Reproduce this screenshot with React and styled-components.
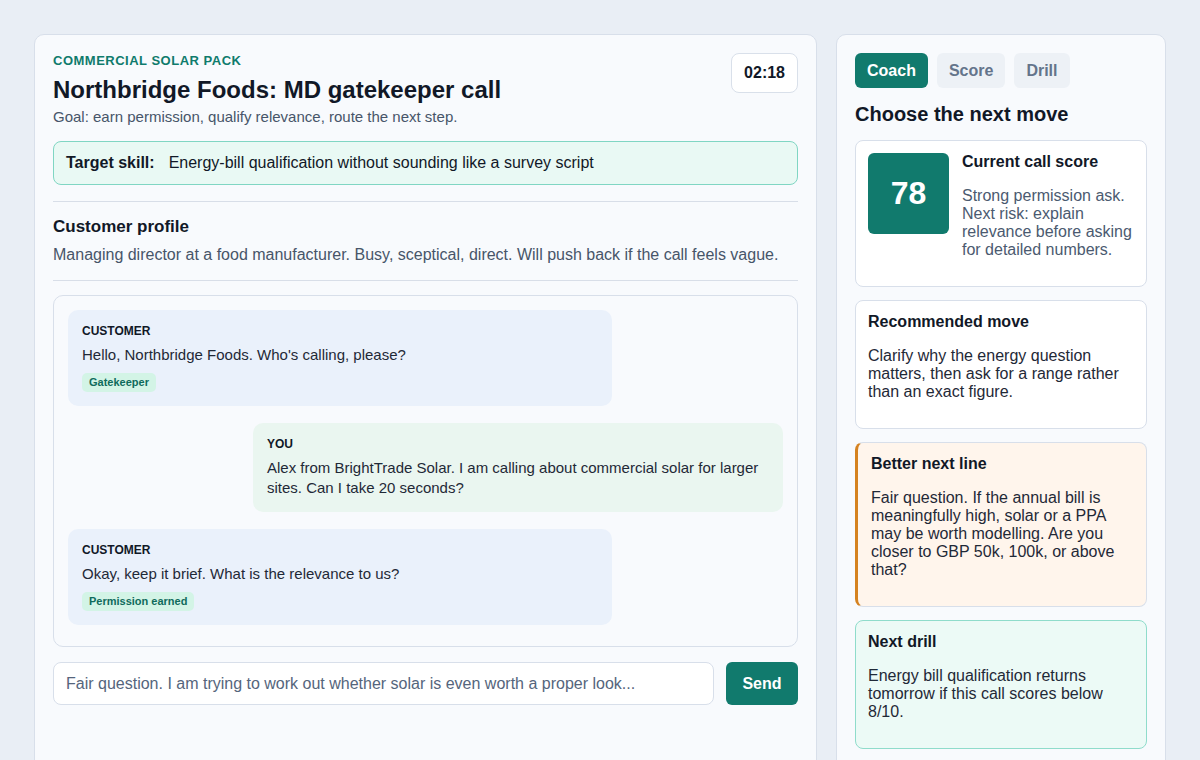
import React from "react";
import styled, { createGlobalStyle } from "styled-components";

const GlobalStyle = createGlobalStyle`
  * { box-sizing: border-box; }
  html, body { margin: 0; padding: 0; }
  body {
    background: #e9eef5;
    font-family: "Liberation Sans", Arial, Helvetica, sans-serif;
    color: #111827;
  }
`;

const Page = styled.div`
  display: grid;
  grid-template-columns: 1fr 330px;
  gap: 19px;
  padding: 34px 34px 0;
  min-height: 800px;
`;

const Panel = styled.section`
  background: #f8fafd;
  border: 1px solid #d8dfea;
  border-radius: 10px;
  padding: 18px;
  display: flex;
  flex-direction: column;
  min-height: 740px;
`;

const HeaderRow = styled.div`
  display: flex;
  justify-content: space-between;
  align-items: flex-start;
`;

const Eyebrow = styled.div`
  font-size: 13px;
  font-weight: 700;
  letter-spacing: 0.5px;
  color: #0f7b6c;
  text-transform: uppercase;
  line-height: 15px;
`;

const Title = styled.h1`
  margin: 8px 0 0;
  font-size: 24px;
  line-height: 28px;
  font-weight: 700;
  color: #111827;
`;

const Subtitle = styled.p`
  margin: 5px 0 0;
  font-size: 15px;
  line-height: 16px;
  color: #475569;
`;

const Timer = styled.div`
  background: #fff;
  border: 1px solid #d9e0ea;
  border-radius: 8px;
  height: 40px;
  padding: 0 12px;
  display: flex;
  align-items: center;
  font-size: 16px;
  font-weight: 700;
  color: #111827;
`;

const SkillBox = styled.div`
  margin-top: 16px;
  background: #e9f9f4;
  border: 1px solid #80d6c3;
  border-radius: 8px;
  padding: 12px 12px;
  display: flex;
  gap: 14px;
  font-size: 16px;
  line-height: 18px;
  color: #111827;
`;

const SkillLabel = styled.strong`
  font-weight: 700;
`;

const Profile = styled.div`
  margin-top: 16px;
  border-top: 1px solid #d8dee8;
  border-bottom: 1px solid #d8dee8;
  padding: 15px 0 16px;
`;

const SectionTitle = styled.h2`
  margin: 0;
  font-size: 17px;
  line-height: 20px;
  font-weight: 700;
  color: #111827;
`;

const ProfileText = styled.p`
  margin: 9px 0 0;
  font-size: 16px;
  line-height: 18px;
  color: #475569;
`;

const Chat = styled.div`
  margin-top: 14px;
  background: #f8fafd;
  border: 1px solid #d8dfea;
  border-radius: 10px;
  padding: 14px 14px;
  height: 352px;
  display: flex;
  flex-direction: column;
  gap: 17px;
`;

const Bubble = styled.div`
  width: ${(p) => p.$width};
  align-self: ${(p) => (p.$mine ? "flex-end" : "flex-start")};
  background: ${(p) => (p.$mine ? "#eaf6f0" : "#eaf1fb")};
  border-radius: 10px;
  padding: 14px 14px 14px;
`;

const Speaker = styled.div`
  font-size: 12px;
  line-height: 15px;
  font-weight: 700;
  color: #111827;
  text-transform: uppercase;
`;

const Line = styled.p`
  margin: 6px 0 0;
  font-size: 15px;
  line-height: 20px;
  color: #1f2937;
`;

const Tag = styled.span`
  display: inline-block;
  margin-top: 8px;
  background: #d3f4e6;
  color: #0f6b5c;
  font-size: 11px;
  font-weight: 700;
  line-height: 13px;
  padding: 3px 7px;
  border-radius: 5px;
`;

const Composer = styled.div`
  margin-top: 15px;
  display: flex;
  gap: 12px;
`;

const Input = styled.input`
  flex: 1;
  height: 43px;
  border: 1px solid #d8dfea;
  border-radius: 8px;
  background: #fff;
  padding: 0 12px;
  font-family: inherit;
  font-size: 16px;
  color: #1f2937;
  &::placeholder { color: #55657c; }
`;

const SendButton = styled.button`
  width: 72px;
  height: 43px;
  border: none;
  border-radius: 6px;
  background: #117a6d;
  color: #fff;
  font-family: inherit;
  font-size: 16px;
  font-weight: 700;
`;

const Tabs = styled.div`
  display: flex;
  gap: 9px;
`;

const Tab = styled.button`
  height: 35px;
  padding: 0 12px;
  border: none;
  border-radius: 6px;
  font-family: inherit;
  font-size: 16px;
  font-weight: 700;
  background: ${(p) => (p.$active ? "#117a6d" : "#edf1f6")};
  color: ${(p) => (p.$active ? "#fff" : "#64748b")};
`;

const SideHeading = styled.h2`
  margin: 15px 0 14px;
  font-size: 20px;
  line-height: 23px;
  font-weight: 700;
  color: #111827;
`;

const Cards = styled.div`
  display: flex;
  flex-direction: column;
  gap: 13px;
`;

const Card = styled.div`
  background: ${(p) => p.$bg || "#fff"};
  border: 1px solid ${(p) => p.$line || "#d8dfea"};
  border-left: ${(p) => (p.$accent ? `3px solid ${p.$accent}` : `1px solid ${p.$line || "#d8dfea"}`)};
  border-radius: 8px;
  padding: 12px 13px 11px ${(p) => (p.$accent ? "13px" : "12px")};
`;

const ScoreRow = styled.div`
  display: flex;
  gap: 13px;
  align-items: flex-start;
`;

const ScoreBadge = styled.div`
  flex: 0 0 81px;
  height: 81px;
  border-radius: 6px;
  background: #117a6d;
  color: #fff;
  font-size: 32px;
  font-weight: 700;
  display: flex;
  align-items: center;
  justify-content: center;
`;

const CardTitle = styled.h3`
  margin: 0;
  font-size: 16px;
  line-height: 18px;
  font-weight: 700;
  color: #111827;
`;

const CardText = styled.p`
  margin: 16px 0;
  font-size: 16px;
  line-height: 18px;
  color: #1f2937;
`;

const ScoreNote = styled(CardText)`
  color: #4b5a70;
`;

export default function App() {
  return (
    <>
      <GlobalStyle />
      <Page>
        <Panel>
          <HeaderRow>
            <div>
              <Eyebrow>Commercial solar pack</Eyebrow>
              <Title>Northbridge Foods: MD gatekeeper call</Title>
              <Subtitle>Goal: earn permission, qualify relevance, route the next step.</Subtitle>
            </div>
            <Timer>02:18</Timer>
          </HeaderRow>

          <SkillBox>
            <SkillLabel>Target skill:</SkillLabel>
            <span>Energy-bill qualification without sounding like a survey script</span>
          </SkillBox>

          <Profile>
            <SectionTitle>Customer profile</SectionTitle>
            <ProfileText>
              Managing director at a food manufacturer. Busy, sceptical, direct. Will push back if the call feels vague.
            </ProfileText>
          </Profile>

          <Chat>
            <Bubble $width="544px">
              <Speaker>Customer</Speaker>
              <Line>Hello, Northbridge Foods. Who's calling, please?</Line>
              <Tag>Gatekeeper</Tag>
            </Bubble>
            <Bubble $mine $width="530px">
              <Speaker>You</Speaker>
              <Line>Alex from BrightTrade Solar. I am calling about commercial solar for larger sites. Can I take 20 seconds?</Line>
            </Bubble>
            <Bubble $width="544px">
              <Speaker>Customer</Speaker>
              <Line>Okay, keep it brief. What is the relevance to us?</Line>
              <Tag>Permission earned</Tag>
            </Bubble>
          </Chat>

          <Composer>
            <Input placeholder="Fair question. I am trying to work out whether solar is even worth a proper look..." />
            <SendButton>Send</SendButton>
          </Composer>
        </Panel>

        <Panel>
          <Tabs>
            <Tab $active>Coach</Tab>
            <Tab>Score</Tab>
            <Tab>Drill</Tab>
          </Tabs>
          <SideHeading>Choose the next move</SideHeading>
          <Cards>
            <Card>
              <ScoreRow>
                <ScoreBadge>78</ScoreBadge>
                <div>
                  <CardTitle>Current call score</CardTitle>
                  <ScoreNote>
                    Strong permission ask. Next risk: explain relevance before asking for detailed numbers.
                  </ScoreNote>
                </div>
              </ScoreRow>
            </Card>
            <Card>
              <CardTitle>Recommended move</CardTitle>
              <CardText>
                Clarify why the energy question matters, then ask for a range rather than an exact figure.
              </CardText>
            </Card>
            <Card $bg="#fff5ec" $accent="#d58220">
              <CardTitle>Better next line</CardTitle>
              <CardText>
                Fair question. If the annual bill is meaningfully high, solar or a PPA may be worth modelling. Are you closer to GBP 50k, 100k, or above that?
              </CardText>
            </Card>
            <Card $bg="#ecfaf6" $line="#8fdccb">
              <CardTitle>Next drill</CardTitle>
              <CardText>
                Energy bill qualification returns tomorrow if this call scores below 8/10.
              </CardText>
            </Card>
          </Cards>
        </Panel>
      </Page>
    </>
  );
}
